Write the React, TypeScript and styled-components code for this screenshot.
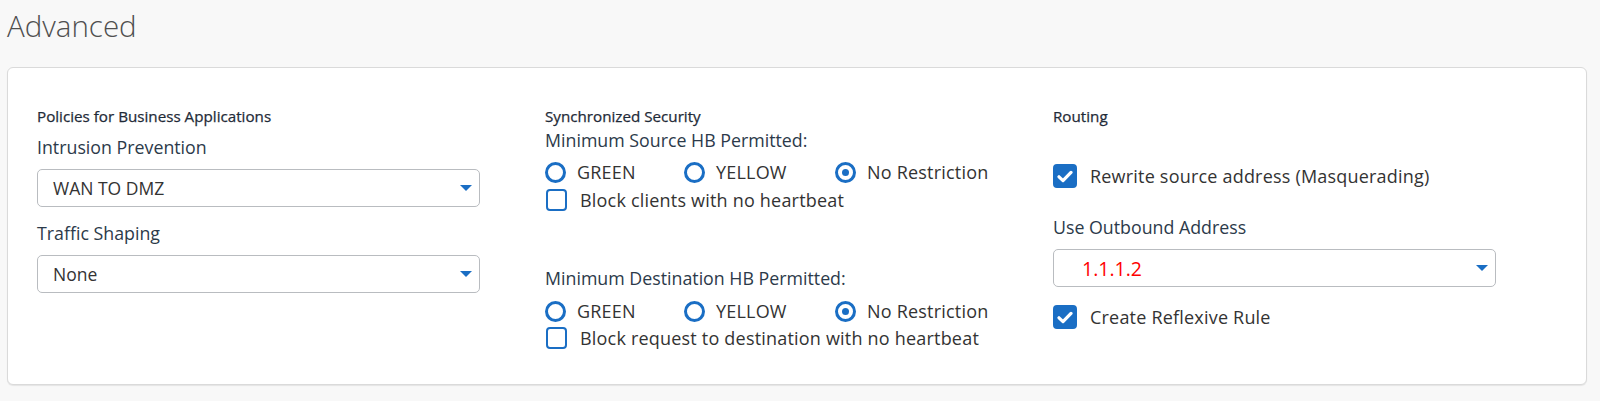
import React from "react";
import styled, { createGlobalStyle } from "styled-components";

const GlobalStyle = createGlobalStyle`
  html, body { margin: 0; padding: 0; background: #f8f8f8; }
  body { font-family: "Open Sans", "Lato", sans-serif; color: #333; }
  * { box-sizing: border-box; }
`;

const BLUE = "#1a6ec4";

const Page = styled.div`
  padding: 8px 13px 0 7px;
  width: 1600px;
  height: 401px;
`;

const Title = styled.h1`
  margin: 0;
  height: 59px;
  padding-top: 0;
  font-family: "Open Sans", sans-serif;
  font-weight: 300;
  font-size: 29.5px;
  line-height: 36px;
  color: #4f4f4f;
`;

const Card = styled.div`
  width: 1580px;
  height: 318px;
  background: #fff;
  border: 1px solid #dadada;
  border-radius: 6px;
  box-shadow: 0 1px 1px rgba(0, 0, 0, 0.08);
  padding: 39px 0 0 29px;
  display: grid;
  grid-template-columns: 508px 508px 508px;
`;

const Column = styled.div`
  display: flex;
  flex-direction: column;
  align-items: flex-start;
`;

const SectionHeading = styled.div`
  font-size: 15.2px;
  line-height: 18px;
  height: 18px;
  font-weight: 400;
  -webkit-text-stroke: 0.25px #1f2b38;
  color: #1f2b38;
`;

const FieldLabel = styled.div<{ $mt: number }>`
  margin-top: ${(p) => p.$mt}px;
  font-size: 17.8px;
  line-height: 22px;
  height: 22px;
  color: #2c3a4a;
`;

const SelectBox = styled.div<{ $mt: number; $indent?: boolean; $danger?: boolean }>`
  margin-top: ${(p) => p.$mt}px;
  width: 443px;
  height: 38px;
  border: 1px solid #b9bcc0;
  border-radius: 5px;
  background: #fff;
  display: flex;
  align-items: center;
  justify-content: space-between;
  padding: 0 7px 0 ${(p) => (p.$indent ? 28 : 15)}px;
  font-size: ${(p) => (p.$danger ? 19.5 : 17.5)}px;
  color: ${(p) => (p.$danger ? "#ff0000" : "#333")};
`;

const Caret = styled.span`
  width: 0;
  height: 0;
  border-left: 6px solid transparent;
  border-right: 6px solid transparent;
  border-top: 6px solid ${BLUE};
`;

const OptionRow = styled.div<{ $mt: number }>`
  margin-top: ${(p) => p.$mt}px;
  display: flex;
  align-items: center;
  height: 24px;
`;

const RadioItem = styled.label<{ $w?: number }>`
  display: flex;
  align-items: center;
  gap: 11px;
  width: ${(p) => (p.$w ? `${p.$w}px` : "auto")};
  font-size: 18px;
  letter-spacing: 0.2px;
  color: #333;
`;

const RadioCircle = styled.span<{ $on?: boolean }>`
  width: 21px;
  height: 21px;
  border-radius: 50%;
  border: 3px solid ${BLUE};
  display: flex;
  align-items: center;
  justify-content: center;
  &::after {
    content: "";
    width: 7px;
    height: 7px;
    border-radius: 50%;
    background: ${(p) => (p.$on ? BLUE : "transparent")};
  }
`;

const CheckItem = styled.label`
  display: flex;
  align-items: center;
  gap: 13px;
  font-size: 18px;
  letter-spacing: 0.2px;
  color: #333;
`;

const CheckBox = styled.span<{ $on?: boolean }>`
  width: ${(p) => (p.$on ? 24 : 21)}px;
  height: ${(p) => (p.$on ? 24 : 22)}px;
  border-radius: 4px;
  border: 2px solid ${BLUE};
  background: ${(p) => (p.$on ? BLUE : "#fff")};
  display: flex;
  align-items: center;
  justify-content: center;
  margin-left: ${(p) => (p.$on ? 0 : 1)}px;
`;

const Check = () => (
  <svg width="16" height="13" viewBox="0 0 16 13">
    <path d="M2 6.8 L6 10.6 L14 2.4" fill="none" stroke="#fff" strokeWidth="3.2" strokeLinecap="round" strokeLinejoin="round" />
  </svg>
);

const Radios = ({ mt }: { mt: number }) => (
  <OptionRow $mt={mt}>
    <RadioItem $w={139}>
      <RadioCircle />
      GREEN
    </RadioItem>
    <RadioItem $w={151}>
      <RadioCircle />
      YELLOW
    </RadioItem>
    <RadioItem>
      <RadioCircle $on />
      No Restriction
    </RadioItem>
  </OptionRow>
);

export default function App() {
  return (
    <>
      <GlobalStyle />
      <Page>
        <Title>Advanced</Title>
        <Card>
          <Column>
            <SectionHeading>Policies for Business Applications</SectionHeading>
            <FieldLabel $mt={11}>Intrusion Prevention</FieldLabel>
            <SelectBox $mt={11}>
              WAN TO DMZ
              <Caret />
            </SelectBox>
            <FieldLabel $mt={15}>Traffic Shaping</FieldLabel>
            <SelectBox $mt={11}>
              None
              <Caret />
            </SelectBox>
          </Column>
          <Column>
            <SectionHeading>Synchronized Security</SectionHeading>
            <FieldLabel $mt={4}>Minimum Source HB Permitted:</FieldLabel>
            <Radios mt={9} />
            <OptionRow $mt={4}>
              <CheckItem>
                <CheckBox />
                Block clients with no heartbeat
              </CheckItem>
            </OptionRow>
            <FieldLabel $mt={55}>Minimum Destination HB Permitted:</FieldLabel>
            <Radios mt={10} />
            <OptionRow $mt={3}>
              <CheckItem>
                <CheckBox />
                Block request to destination with no heartbeat
              </CheckItem>
            </OptionRow>
          </Column>
          <Column>
            <SectionHeading>Routing</SectionHeading>
            <OptionRow $mt={39}>
              <CheckItem>
                <CheckBox $on>
                  <Check />
                </CheckBox>
                Rewrite source address (Masquerading)
              </CheckItem>
            </OptionRow>
            <FieldLabel $mt={28}>Use Outbound Address</FieldLabel>
            <SelectBox $mt={11} $indent $danger>
              1.1.1.2
              <Caret />
            </SelectBox>
            <OptionRow $mt={18}>
              <CheckItem>
                <CheckBox $on>
                  <Check />
                </CheckBox>
                Create Reflexive Rule
              </CheckItem>
            </OptionRow>
          </Column>
        </Card>
      </Page>
    </>
  );
}
